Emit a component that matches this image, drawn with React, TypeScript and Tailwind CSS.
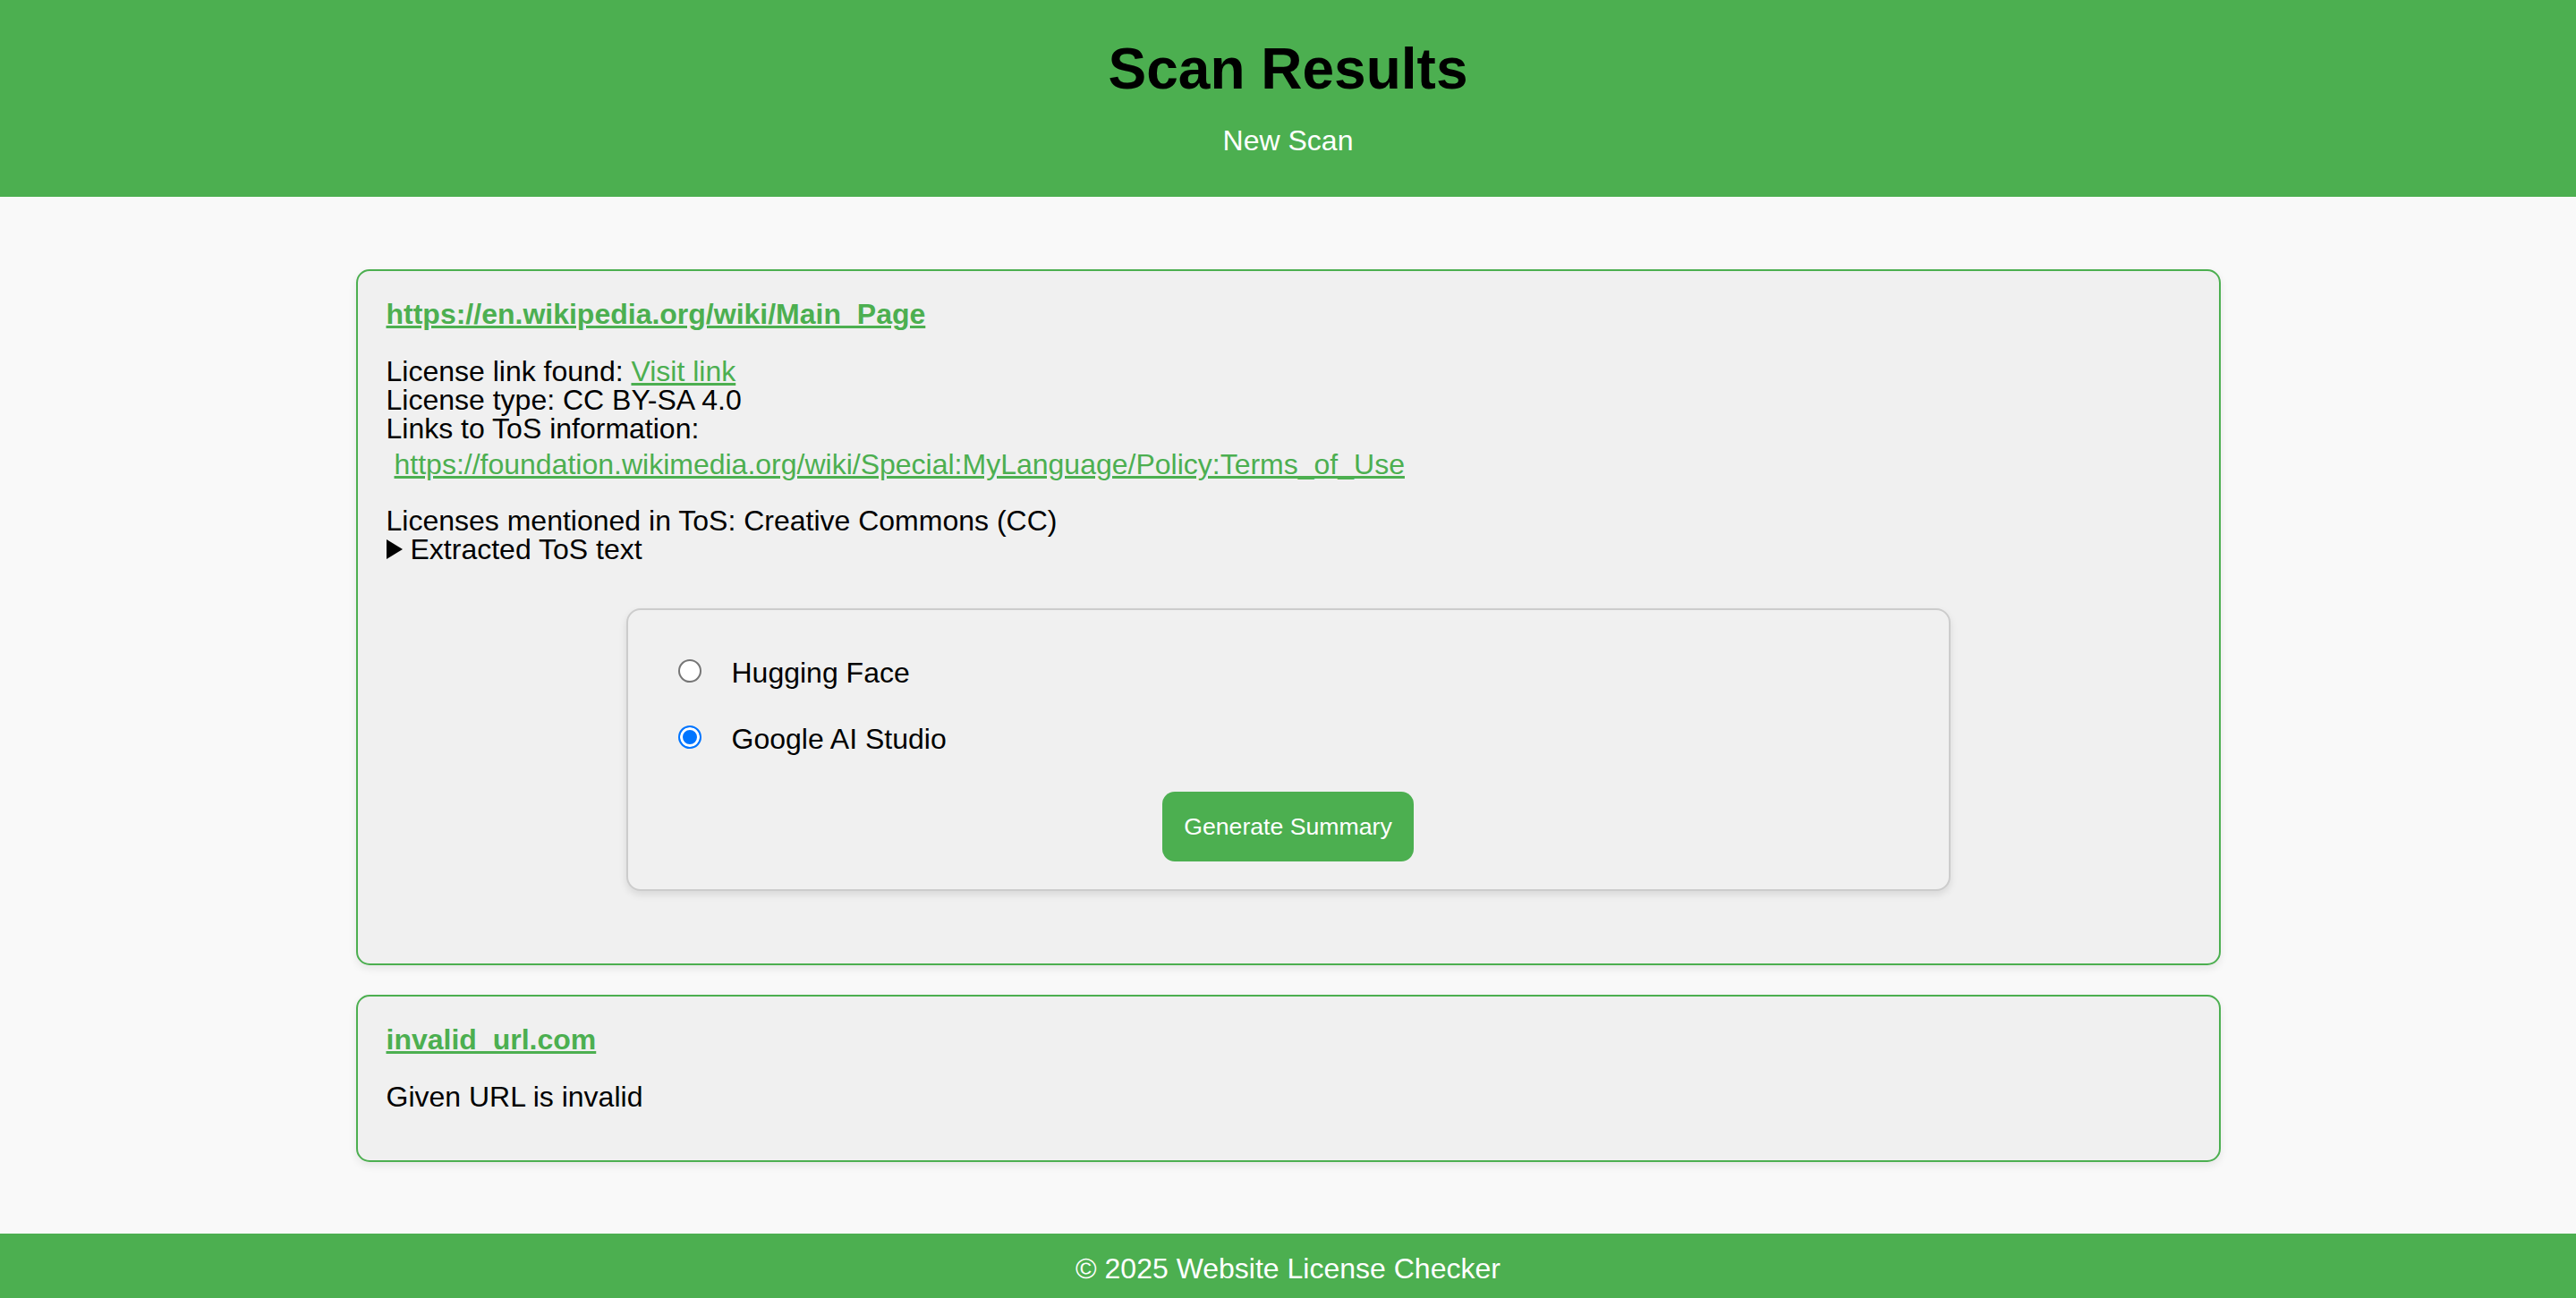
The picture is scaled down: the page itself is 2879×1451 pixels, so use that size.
import React, { useState } from 'react';

type Provider = 'huggingface' | 'google';

const ResultCard: React.FC<{ url: string; className?: string; children: React.ReactNode }> = ({
  url,
  className = '',
  children,
}) => (
  <div
    className={`w-[2084px] mx-auto bg-[#f0f0f0] border-2 border-[#4caf50] rounded-[15px] px-[32px] pt-[30px] shadow-[0_4px_10px_rgba(0,0,0,0.08)] ${className}`}
  >
    <a href="#" className="block w-fit font-bold text-[32px] leading-[37px] text-[#4caf50] underline">
      {url}
    </a>
    {children}
  </div>
);

const App: React.FC = () => {
  const [provider, setProvider] = useState<Provider>('google');

  return (
    <div className="min-h-[1451px] flex flex-col bg-[#f9f9f9] text-black font-['Liberation_Sans',Arial,sans-serif]">
      <header className="h-[220px] bg-[#4caf50] flex flex-col items-center pt-[41px]">
        <h1 className="text-[64px] leading-[73px] font-bold">Scan Results</h1>
        <a href="#" className="mt-[27px] text-[32px] leading-[32px] text-white">
          New Scan
        </a>
      </header>

      <main className="flex-1 pt-[81px] pb-[80px]">
        <ResultCard url="https://en.wikipedia.org/wiki/Main_Page" className="pb-[81px]">
          <div className="mt-[29px] text-[32px] leading-[32px]">
            <div>
              License link found:{' '}
              <a href="#" className="text-[#4caf50] underline">
                Visit link
              </a>
            </div>
            <div>License type: CC BY-SA 4.0</div>
            <div>Links to ToS information:</div>
            <div className="mt-[8px] pl-[9px]">
              <a href="#" className="text-[#4caf50] underline">
                https://foundation.wikimedia.org/wiki/Special:MyLanguage/Policy:Terms_of_Use
              </a>
            </div>
            <div className="mt-[31px]">Licenses mentioned in ToS: Creative Commons (CC)</div>
            <details>
              <summary className="list-none cursor-pointer [&::-webkit-details-marker]:hidden">
                <svg width="18" height="22" viewBox="0 0 18 22" className="inline-block align-baseline mr-[9px]">
                  <polygon points="0,0 18,11 0,22" fill="black" />
                </svg>
                Extracted ToS text
              </summary>
              <div className="text-[28px]">Terms of Use text…</div>
            </details>
          </div>

          <div className="mt-[50px] w-[1480px] mx-auto bg-[#f0f0f0] border-2 border-[#cccccc] rounded-[16px] pt-[40px] pb-[31px] px-[56px] shadow-[0_4px_8px_rgba(0,0,0,0.1)]">
            <label className="flex items-center h-[56px] text-[32px] cursor-pointer">
              <input
                type="radio"
                name="provider"
                checked={provider === 'huggingface'}
                onChange={() => setProvider('huggingface')}
                className="appearance-none w-[26px] h-[26px] rounded-full border-2 border-[#767676] bg-white checked:border-[#0075ff] checked:bg-[#0075ff] checked:shadow-[inset_0_0_0_3px_white]"
              />
              <span className="ml-[34px] pt-[3px]">Hugging Face</span>
            </label>
            <label className="mt-[18px] flex items-center h-[56px] text-[32px] cursor-pointer">
              <input
                type="radio"
                name="provider"
                checked={provider === 'google'}
                onChange={() => setProvider('google')}
                className="appearance-none w-[26px] h-[26px] rounded-full border-2 border-[#767676] bg-white checked:border-[#0075ff] checked:bg-[#0075ff] checked:shadow-[inset_0_0_0_3px_white]"
              />
              <span className="ml-[34px] pt-[3px]">Google AI Studio</span>
            </label>
            <div className="mt-[33px] flex justify-center">
              <button className="h-[78px] px-[24px] rounded-[14px] bg-[#4caf50] text-white text-[26.67px] leading-none">
                Generate Summary
              </button>
            </div>
          </div>
        </ResultCard>

        <ResultCard url="invalid_url.com" className="mt-[33px] pb-[55px]">
          <div className="mt-[29px] text-[32px] leading-[32px]">Given URL is invalid</div>
        </ResultCard>
      </main>

      <footer className="h-[72px] bg-[#4caf50] text-white text-center text-[32px] leading-[37px] pt-[21px] overflow-hidden">
        © 2025 Website License Checker
      </footer>
    </div>
  );
};

export default App;
